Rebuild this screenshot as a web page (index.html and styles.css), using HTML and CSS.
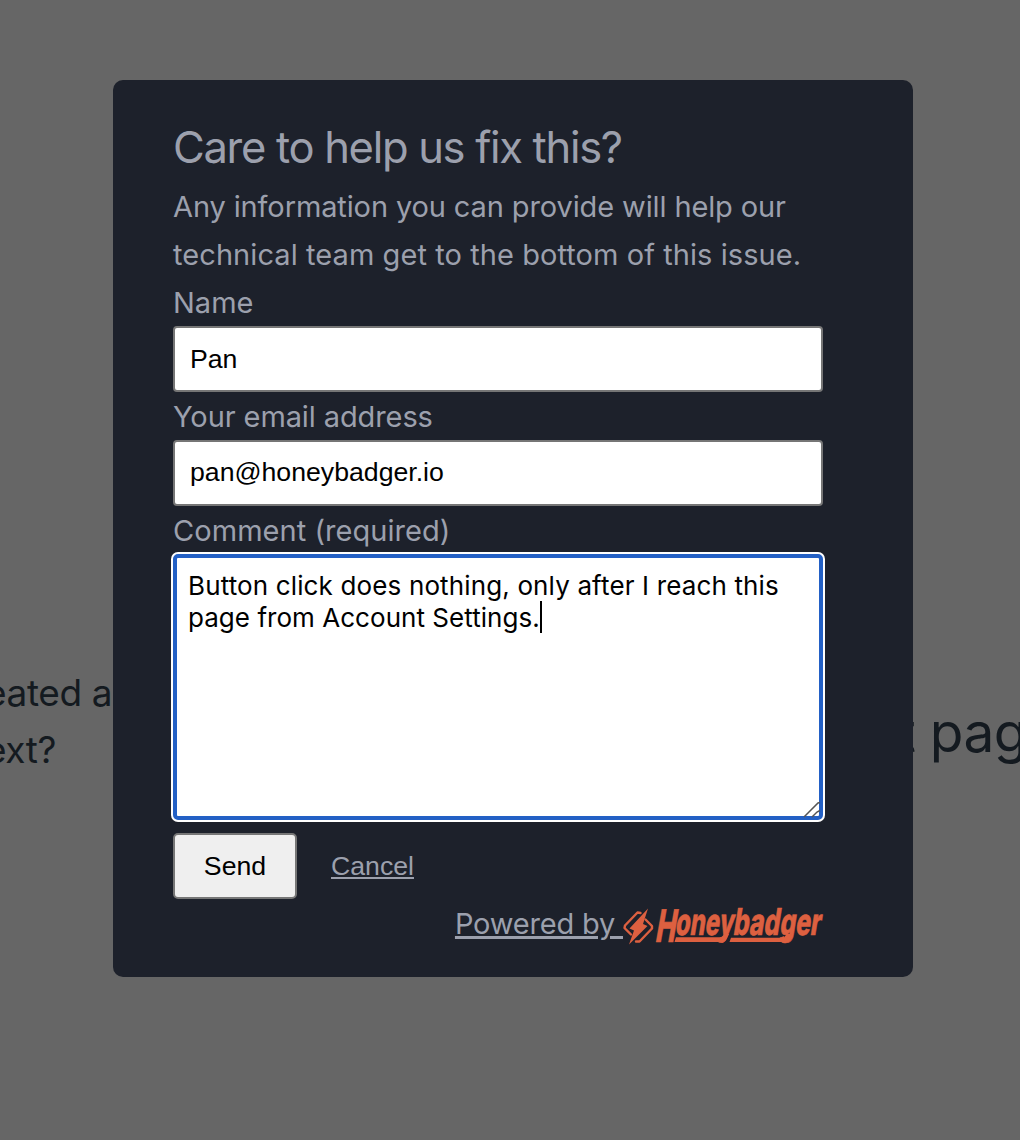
FILE: index.html
```
<!DOCTYPE html>
<html lang="en">
<head>
    <meta charset="UTF-8">
    <meta name="viewport" content="width=device-width, initial-scale=1.0">
    <title>Feedback</title>
    <link rel="stylesheet" href="styles.css">
</head>
<body>

<!-- Page content behind the overlay -->
<div class="page">
    <p class="page-question">eated a<br>ext?</p>
    <p class="page-heading">t pag</p>
</div>

<div class="modal">
    <h2>Care to help us fix this?</h2>
    <p class="intro"><span class="intro-first">Any information you can provide will help our</span><br>technical team get to the bottom of this issue.</p>
    <form>
        <label class="label-name" for="name">Name</label>
        <input type="text" id="name" value="Pan">
        <label class="label-email" for="email">Your email address</label>
        <input type="text" id="email" value="pan@honeybadger.io">
        <label class="label-comment" for="comment">Comment (required)</label>
        <div class="comment" id="comment">
            <div class="line-one">Button click does nothing, only after I reach this</div>
            <div class="line-two">page from Account Settings.<span class="caret"></span></div>
            <svg class="grip" width="18" height="18" viewBox="0 0 18 18">
                <path d="M1 17L15 3L17 2.5M9 17L14 12L17 10.5" stroke="#555" stroke-width="1.5" fill="none"/>
            </svg>
        </div>
        <div class="actions">
            <button type="button">Send</button>
            <a class="cancel">Cancel</a>
        </div>
    </form>
    <div class="powered">
        <a>Powered by&nbsp;</a>
        <svg class="logo" width="200" height="38" viewBox="0 0 200 38">
            <g fill="none" stroke="#dd6040" stroke-width="2.4" stroke-linejoin="round" stroke-linecap="round">
                <path d="M17.5 5L14.5 4.5L2 17.5L1.5 20L8 26.5"/>
                <path d="M22.5 11.5L29 18L29 20.5L16.5 33.5L13 33.5"/>
            </g>
            <path d="M25 .5L20 16L24.5 18L6 36.5L11 22.5L6.5 20.5Z" fill="#dd6040"/>
            <g fill="#dd6040">
                <text class="logo-cap" transform="translate(31.5 34) skewX(-10)" textLength="20" lengthAdjust="spacingAndGlyphs">H</text>
                <text class="logo-text" transform="translate(51.5 26.5) skewX(-9)" textLength="58.5" lengthAdjust="spacingAndGlyphs">oney</text>
                <text class="logo-text" transform="translate(109.5 26.5) skewX(-9)" textLength="87.5" lengthAdjust="spacingAndGlyphs">badger</text>
                <path d="M53 29.3H98L102 26H106L103.5 31Q102.5 34 99 34H51.5Z"/>
                <path d="M108 29.8H161L163.5 26H169L167.5 31Q166.5 34 163 34H106.5Z"/>
            </g>
        </svg>
    </div>
</div>

</body>
</html>
```
FILE: styles.css
```
* {
    box-sizing: border-box;
}
body {
    margin: 0;
    height: 1140px;
    padding-top: 80px;
    position: relative;
    overflow: hidden;
    background-color: #666;
    font-family: Inter, 'Liberation Sans', sans-serif;
}
.page {
    position: absolute;
    inset: 0;
    display: flex;
    justify-content: space-between;
    align-items: flex-start;
    color: #141a20;
}
.page p {
    margin: 0;
    white-space: nowrap;
}
.page .page-question {
    padding-top: 664px;
    margin-left: -15px;
    font-size: 37px;
    line-height: 57px;
    letter-spacing: -0.4px;
}
.page .page-heading {
    padding-top: 696px;
    margin-right: -7px;
    font-size: 55px;
    line-height: 72px;
    letter-spacing: -0.5px;
    word-spacing: -0.5px;
}
.modal {
    position: relative;
    width: 800px;
    height: 897px;
    margin-left: 113px;
    padding: 34px 90px 0 60px;
    background-color: #1d212b;
    border-radius: 10px;
    color: #9ca0ad;
    font-size: 29px;
    line-height: 48px;
}
h2 {
    margin: 0 0 2px;
    font-size: 43.5px;
    font-weight: normal;
    line-height: 67px;
    letter-spacing: -1.3px;
}
.intro {
    margin: 0;
    white-space: nowrap;
    letter-spacing: 0.07px;
}
.intro-first {
    letter-spacing: -0.12px;
}
label {
    display: block;
    height: 47px;
}
.label-email {
    letter-spacing: -0.1px;
}
.label-comment {
    letter-spacing: 0.05px;
}
input {
    display: block;
    width: 650px;
    height: 66px;
    margin-bottom: 1px;
    padding: 0 15px;
    border: 2px solid #767676;
    border-radius: 4px;
    background-color: #fff;
    color: #000;
    font-family: 'Liberation Sans', sans-serif;
    font-size: 26.67px;
}
#email {
    padding-bottom: 2px;
}
.comment {
    position: relative;
    width: 650px;
    height: 266px;
    padding: 12px 11px;
    border: 4px solid #2360c5;
    border-radius: 5px;
    box-shadow: 0 0 0 2px #fff;
    background-color: #fff;
    color: #000;
    font-size: 26px;
    line-height: 32px;
    white-space: nowrap;
}
.line-one {
    letter-spacing: 0.14px;
}
.line-two {
    letter-spacing: 0.04px;
}
.caret {
    display: inline-block;
    width: 2px;
    height: 32px;
    vertical-align: top;
    margin-top: -1px;
    background-color: #000;
}
.grip {
    position: absolute;
    right: -2px;
    bottom: -2px;
}
.actions {
    display: flex;
    align-items: center;
    margin-top: 13px;
    font-family: 'Liberation Sans', sans-serif;
    font-size: 26.67px;
}
button {
    width: 124px;
    height: 66px;
    padding: 0;
    border: 2px solid #767676;
    border-radius: 5px;
    background-color: #efefef;
    color: #000;
    font-family: inherit;
    font-size: inherit;
}
.cancel {
    margin-left: 34px;
    text-decoration: underline;
    text-decoration-thickness: 2px;
    text-underline-offset: 2px;
}
.powered {
    display: flex;
    justify-content: flex-end;
    margin-top: 1px;
}
.powered a {
    text-decoration: underline;
    text-decoration-thickness: 3px;
    text-underline-offset: 2px;
    letter-spacing: -0.2px;
    white-space: nowrap;
}
.logo {
    margin-top: 8px;
    overflow: visible;
}
.logo-cap,
.logo-text {
    font-family: Inter, 'Liberation Sans', sans-serif;
    font-weight: 800;
    stroke: #dd6040;
    stroke-width: 0.6px;
}
.logo-cap {
    font-size: 45px;
}
.logo-text {
    font-size: 37px;
}
```
